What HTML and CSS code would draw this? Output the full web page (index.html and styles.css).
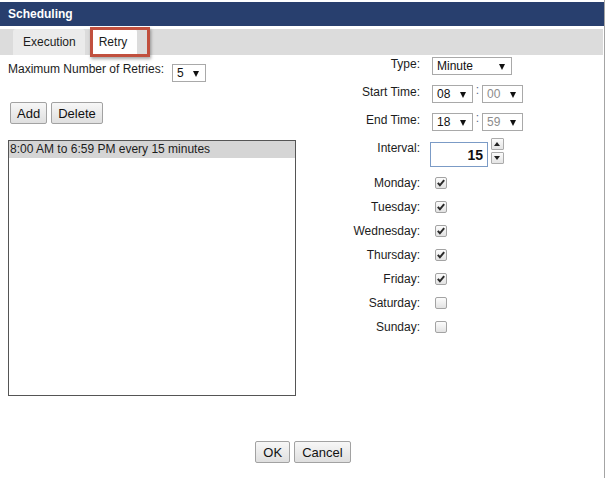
FILE: index.html
```
<!DOCTYPE html>
<html lang="en">
<head>
	<meta charset="UTF-8">
	<title>Scheduling</title>
	<link rel="stylesheet" href="styles.css">
</head>
<body>
	<div class="dialog">
		<div class="titlebar">Scheduling</div>
		<div class="tabs">
			<span class="tab">Execution</span>
			<span class="tab active">Retry</span>
			<span class="callout"></span>
		</div>
		<div class="content">
			<div class="left">
				<div class="retries">
					<span class="lbl">Maximum Number of Retries:</span>
					<span class="sel w-retry">5</span>
				</div>
				<div class="actions">
					<button class="btn">Add</button>
					<button class="btn">Delete</button>
				</div>
				<div class="listbox">
					<div class="item selected">8:00 AM to 6:59 PM every 15 minutes</div>
				</div>
			</div>
			<div class="right">
				<div class="row">
					<label>Type:</label>
					<span class="sel w-type">Minute</span>
				</div>
				<div class="row">
					<label>Start Time:</label>
					<span class="sel w-time">08</span>
					<span class="colon">:</span>
					<span class="sel w-time off">00</span>
				</div>
				<div class="row">
					<label>End Time:</label>
					<span class="sel w-time">18</span>
					<span class="colon">:</span>
					<span class="sel w-time off">59</span>
				</div>
				<div class="row interval">
					<label>Interval:</label>
					<span class="num">15</span>
					<span class="spin">
						<span class="up"></span>
						<span class="down"></span>
					</span>
				</div>
				<div class="days">
					<div class="day"><label>Monday:</label><span class="cb on"><svg viewBox="0 0 11 11"><path d="M2 5.4 L4.3 8 L9 2.4"/></svg></span></div>
					<div class="day"><label>Tuesday:</label><span class="cb on"><svg viewBox="0 0 11 11"><path d="M2 5.4 L4.3 8 L9 2.4"/></svg></span></div>
					<div class="day"><label>Wednesday:</label><span class="cb on"><svg viewBox="0 0 11 11"><path d="M2 5.4 L4.3 8 L9 2.4"/></svg></span></div>
					<div class="day"><label>Thursday:</label><span class="cb on"><svg viewBox="0 0 11 11"><path d="M2 5.4 L4.3 8 L9 2.4"/></svg></span></div>
					<div class="day"><label>Friday:</label><span class="cb on"><svg viewBox="0 0 11 11"><path d="M2 5.4 L4.3 8 L9 2.4"/></svg></span></div>
					<div class="day"><label>Saturday:</label><span class="cb"></span></div>
					<div class="day"><label>Sunday:</label><span class="cb"></span></div>
				</div>
			</div>
		</div>
		<div class="footer">
			<button class="btn">OK</button>
			<button class="btn">Cancel</button>
		</div>
	</div>
</body>
</html>
```
FILE: styles.css
```
/* dialog 606 wide, navy title, grey tab strip */
body{
	margin:0;
	font-family:"Liberation Sans", Arial, sans-serif;
	font-size:12px;
	color:#1c1c1c;
	background:#fff;
}
.dialog{
	width:605px;
	height:478px;
	border-right:1px solid #a4a4a4;
	padding-top:2px;
	box-sizing:border-box;
}
.titlebar{
	height:24px;
	line-height:24px;
	background:#283f6e;
	color:#fff;
	font-weight:bold;
	padding-left:8px;
}
.tabs{
	position:relative;
	display:flex;
	gap:7px;
	width:603px;
	height:26px;
	margin-top:3px;
	padding-left:13px;
	box-sizing:border-box;
	background:#dcdcdc;
}
.tab{
	height:26px;
	line-height:26px;
	padding:0 9px 0 10px;
	background:#ebebeb;
	border-radius:3px 3px 0 0;
}
.tab.active{
	background:#fff;
	padding:0 10px 0 7px;
}
.callout{
	position:absolute;
	left:90px;
	top:-2px;
	width:60px;
	height:30px;
	box-sizing:border-box;
	border:3px solid #c1503e;
	box-shadow:1px 2px 3px rgba(0,0,0,.35);
}
.content{
	display:flex;
}
.left{
	width:340px;
	padding-left:8px;
	box-sizing:border-box;
}
.retries{
	display:flex;
	align-items:flex-start;
	margin-top:7px;
	gap:8px;
}
.retries .lbl{
	line-height:14px;
}
.retries .sel{
	margin-top:2px;
}
.actions{
	display:flex;
	gap:4px;
	margin:20px 0 0 2px;
}
.btn{
	height:22px;
	padding:0 6px;
	font-family:"Liberation Sans", Arial, sans-serif;
	font-size:13px;
	color:#111;
	border:1px solid #a2a2a2;
	border-radius:2px;
	background:linear-gradient(#f7f7f7,#dfdfdf);
}
.listbox{
	width:288px;
	height:256px;
	margin-top:16px;
	box-sizing:border-box;
	border:1px solid #555;
}
.item{
	height:17px;
	line-height:17px;
	padding-left:1px;
}
.item.selected{
	background:#d5d5d5;
}

/* form column */
.right{
	display:flex;
	flex-direction:column;
	gap:10px;
	padding-top:2px;
}
.row{
	display:flex;
	align-items:flex-start;
}
.row label, .day label{
	width:80px;
	margin-right:12px;
	text-align:right;
	line-height:14px;
}
.sel{
	position:relative;
	display:inline-block;
	height:18px;
	line-height:17px;
	padding-left:4px;
	box-sizing:border-box;
	border:1px solid #a9a9a9;
	background:#fff;
	color:#111;
}
.sel::after{
	content:"";
	position:absolute;
	right:6px;
	top:6px;
	border-left:3px solid transparent;
	border-right:3px solid transparent;
	border-top:6px solid #111;
}
.sel.off{
	color:#8c8c8c;
}
.w-retry{width:34px;}
.w-type{width:80px;}
.w-time{width:41px;}
.colon{
	width:9px;
	text-align:center;
	line-height:10px;
	color:#5a6a8a;
}
.row.interval label{
	margin-right:10px;
}
.num{
	width:58px;
	height:25px;
	line-height:25px;
	margin-top:1px;
	box-sizing:border-box;
	border:1px solid #7b9bc6;
	text-align:right;
	padding-right:4px;
	font-size:14px;
	font-weight:bold;
	color:#111;
}
.spin{
	display:flex;
	flex-direction:column;
	gap:2px;
	margin:-3px 0 0 3px;
}
.spin span{
	position:relative;
	width:13px;
	height:12px;
	box-sizing:border-box;
	border:1px solid #ababab;
	border-radius:1px;
	background:linear-gradient(#fbfbfb,#e4e4e4);
}
.spin span::after{
	content:"";
	position:absolute;
	left:2px;
	top:3px;
	border-left:3.5px solid transparent;
	border-right:3.5px solid transparent;
}
.spin .up::after{
	border-bottom:4px solid #222;
}
.spin .down::after{
	border-top:4px solid #222;
}
.days{
	margin-top:-6px;
}
.day{
	display:flex;
	align-items:center;
	height:24px;
}
.cb{
	width:12px;
	height:12px;
	margin-left:3px;
	box-sizing:border-box;
	border:1px solid #a3a3a3;
	border-radius:2px;
	background:linear-gradient(#fcfcfc,#e2e2e2);
}
.cb svg{
	display:block;
	width:10px;
	height:10px;
	fill:none;
	stroke:#2a2a2a;
	stroke-width:2.2;
}
.footer{
	display:flex;
	justify-content:center;
	gap:4px;
	margin-top:45px;
	padding-left:2px;
}
.footer .btn{
	padding:0 7px;
}
```
